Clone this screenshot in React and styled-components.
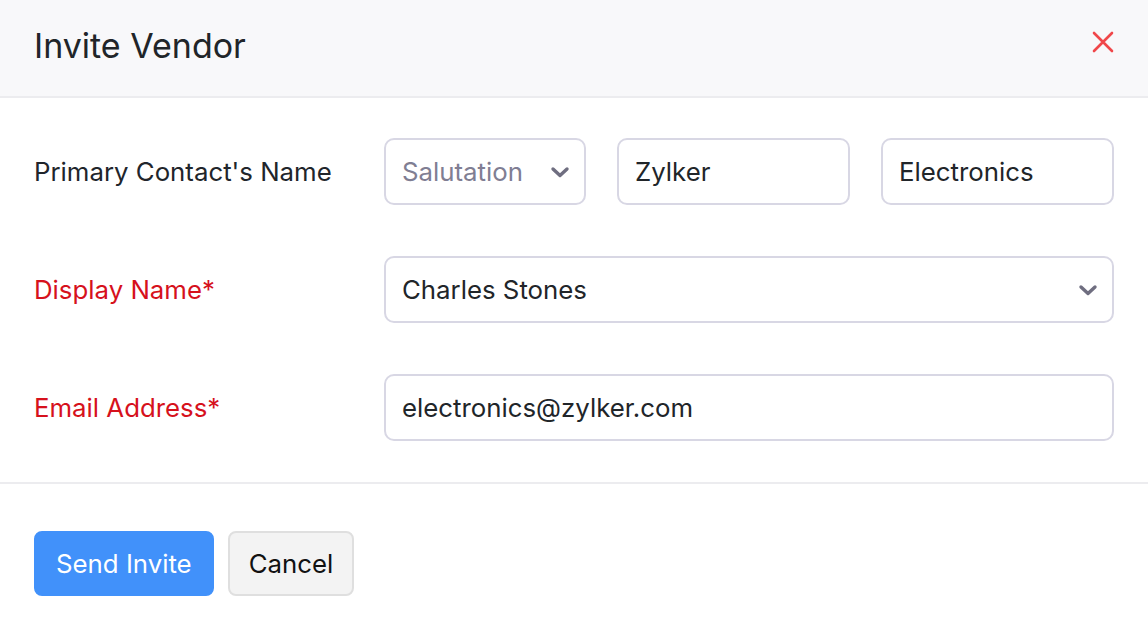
import React from "react";
import styled, { createGlobalStyle } from "styled-components";

const Global = createGlobalStyle`
  html, body { margin: 0; padding: 0; background: #fff; }
  body { font-family: Inter, "Noto Sans", sans-serif; -webkit-font-smoothing: antialiased; }
  * { box-sizing: border-box; }
`;

const Modal = styled.div`
  width: 1148px;
  height: 636px;
  background: #fff;
  display: flex;
  flex-direction: column;
`;

const Header = styled.div`
  height: 98px;
  background: #f8f8fa;
  border-bottom: 2px solid #ececef;
  display: flex;
  align-items: center;
  justify-content: space-between;
  padding: 0 34px 6px 34px;
`;

const Title = styled.h1`
  margin: 0;
  font-size: 34px;
  font-weight: 400;
  color: #212529;
  letter-spacing: 0;
`;

const Close = styled.button`
  border: 0;
  background: none;
  padding: 0;
  width: 24px;
  height: 24px;
  display: flex;
  align-items: center;
  justify-content: center;
  cursor: pointer;
  margin-right: -1px;
  margin-bottom: 7px;
`;

const Body = styled.div`
  padding: 40px 34px 41px 34px;
  display: flex;
  flex-direction: column;
  gap: 51px;
  border-bottom: 2px solid #ececef;
`;

const Row = styled.div`
  display: grid;
  grid-template-columns: 350px 1fr;
  align-items: center;
`;

const Label = styled.label`
  font-size: 25.8px;
  color: ${(p) => (p.$required ? "#d6111c" : "#21252b")};
`;

const Fields = styled.div`
  display: flex;
  gap: 31px;
`;

const Box = styled.div`
  position: relative;
  height: 67px;
  width: ${(p) => p.$w || "100%"};
  flex: ${(p) => (p.$w ? "none" : "1")};
  border: 2px solid #d8d7e4;
  border-radius: 10px;
  display: flex;
  align-items: center;
  padding: 0 16px;
  font-size: 25.8px;
  color: ${(p) => (p.$placeholder ? "#807e93" : "#212529")};
  background: #fff;
`;

const Chevron = styled.svg`
  position: absolute;
  right: 13px;
  top: 50%;
  transform: translateY(-50%);
`;

const Footer = styled.div`
  padding: 47px 34px 0 34px;
  display: flex;
  gap: 14px;
`;

const Button = styled.button`
  height: 65px;
  padding: 0 ${(p) => (p.$primary ? "20px" : "19px")};
  border-radius: 8px;
  font-family: Inter, "Noto Sans", sans-serif;
  font-size: 25.8px;
  border: 2px solid ${(p) => (p.$primary ? "#4191fa" : "#dfdfdf")};
  background: ${(p) => (p.$primary ? "#4191fa" : "#f3f3f3")};
  color: ${(p) => (p.$primary ? "#fff" : "#111")};
  cursor: pointer;
`;

const ChevronIcon = () => (
  <Chevron width="22" height="14" viewBox="0 0 22 14">
    <path d="M4 4 L11 10.5 L18 4" fill="none" stroke="#6f6e80" strokeWidth="3.4" strokeLinecap="round" strokeLinejoin="round" />
  </Chevron>
);

export default function App() {
  return (
    <>
      <Global />
      <Modal>
        <Header>
          <Title>Invite Vendor</Title>
          <Close aria-label="Close">
            <svg width="22" height="22" viewBox="0 0 22 22">
              <path d="M2 2 L20 20 M20 2 L2 20" stroke="#f0474a" strokeWidth="2.6" strokeLinecap="round" />
            </svg>
          </Close>
        </Header>
        <Body>
          <Row>
            <Label>Primary Contact's Name</Label>
            <Fields>
              <Box $w="202px" $placeholder>
                Salutation
                <ChevronIcon />
              </Box>
              <Box $w="233px">Zylker</Box>
              <Box>Electronics</Box>
            </Fields>
          </Row>
          <Row>
            <Label $required>Display Name*</Label>
            <Box>
              Charles Stones
              <ChevronIcon />
            </Box>
          </Row>
          <Row>
            <Label $required>Email Address*</Label>
            <Box>electronics@zylker.com</Box>
          </Row>
        </Body>
        <Footer>
          <Button $primary>Send Invite</Button>
          <Button>Cancel</Button>
        </Footer>
      </Modal>
    </>
  );
}
